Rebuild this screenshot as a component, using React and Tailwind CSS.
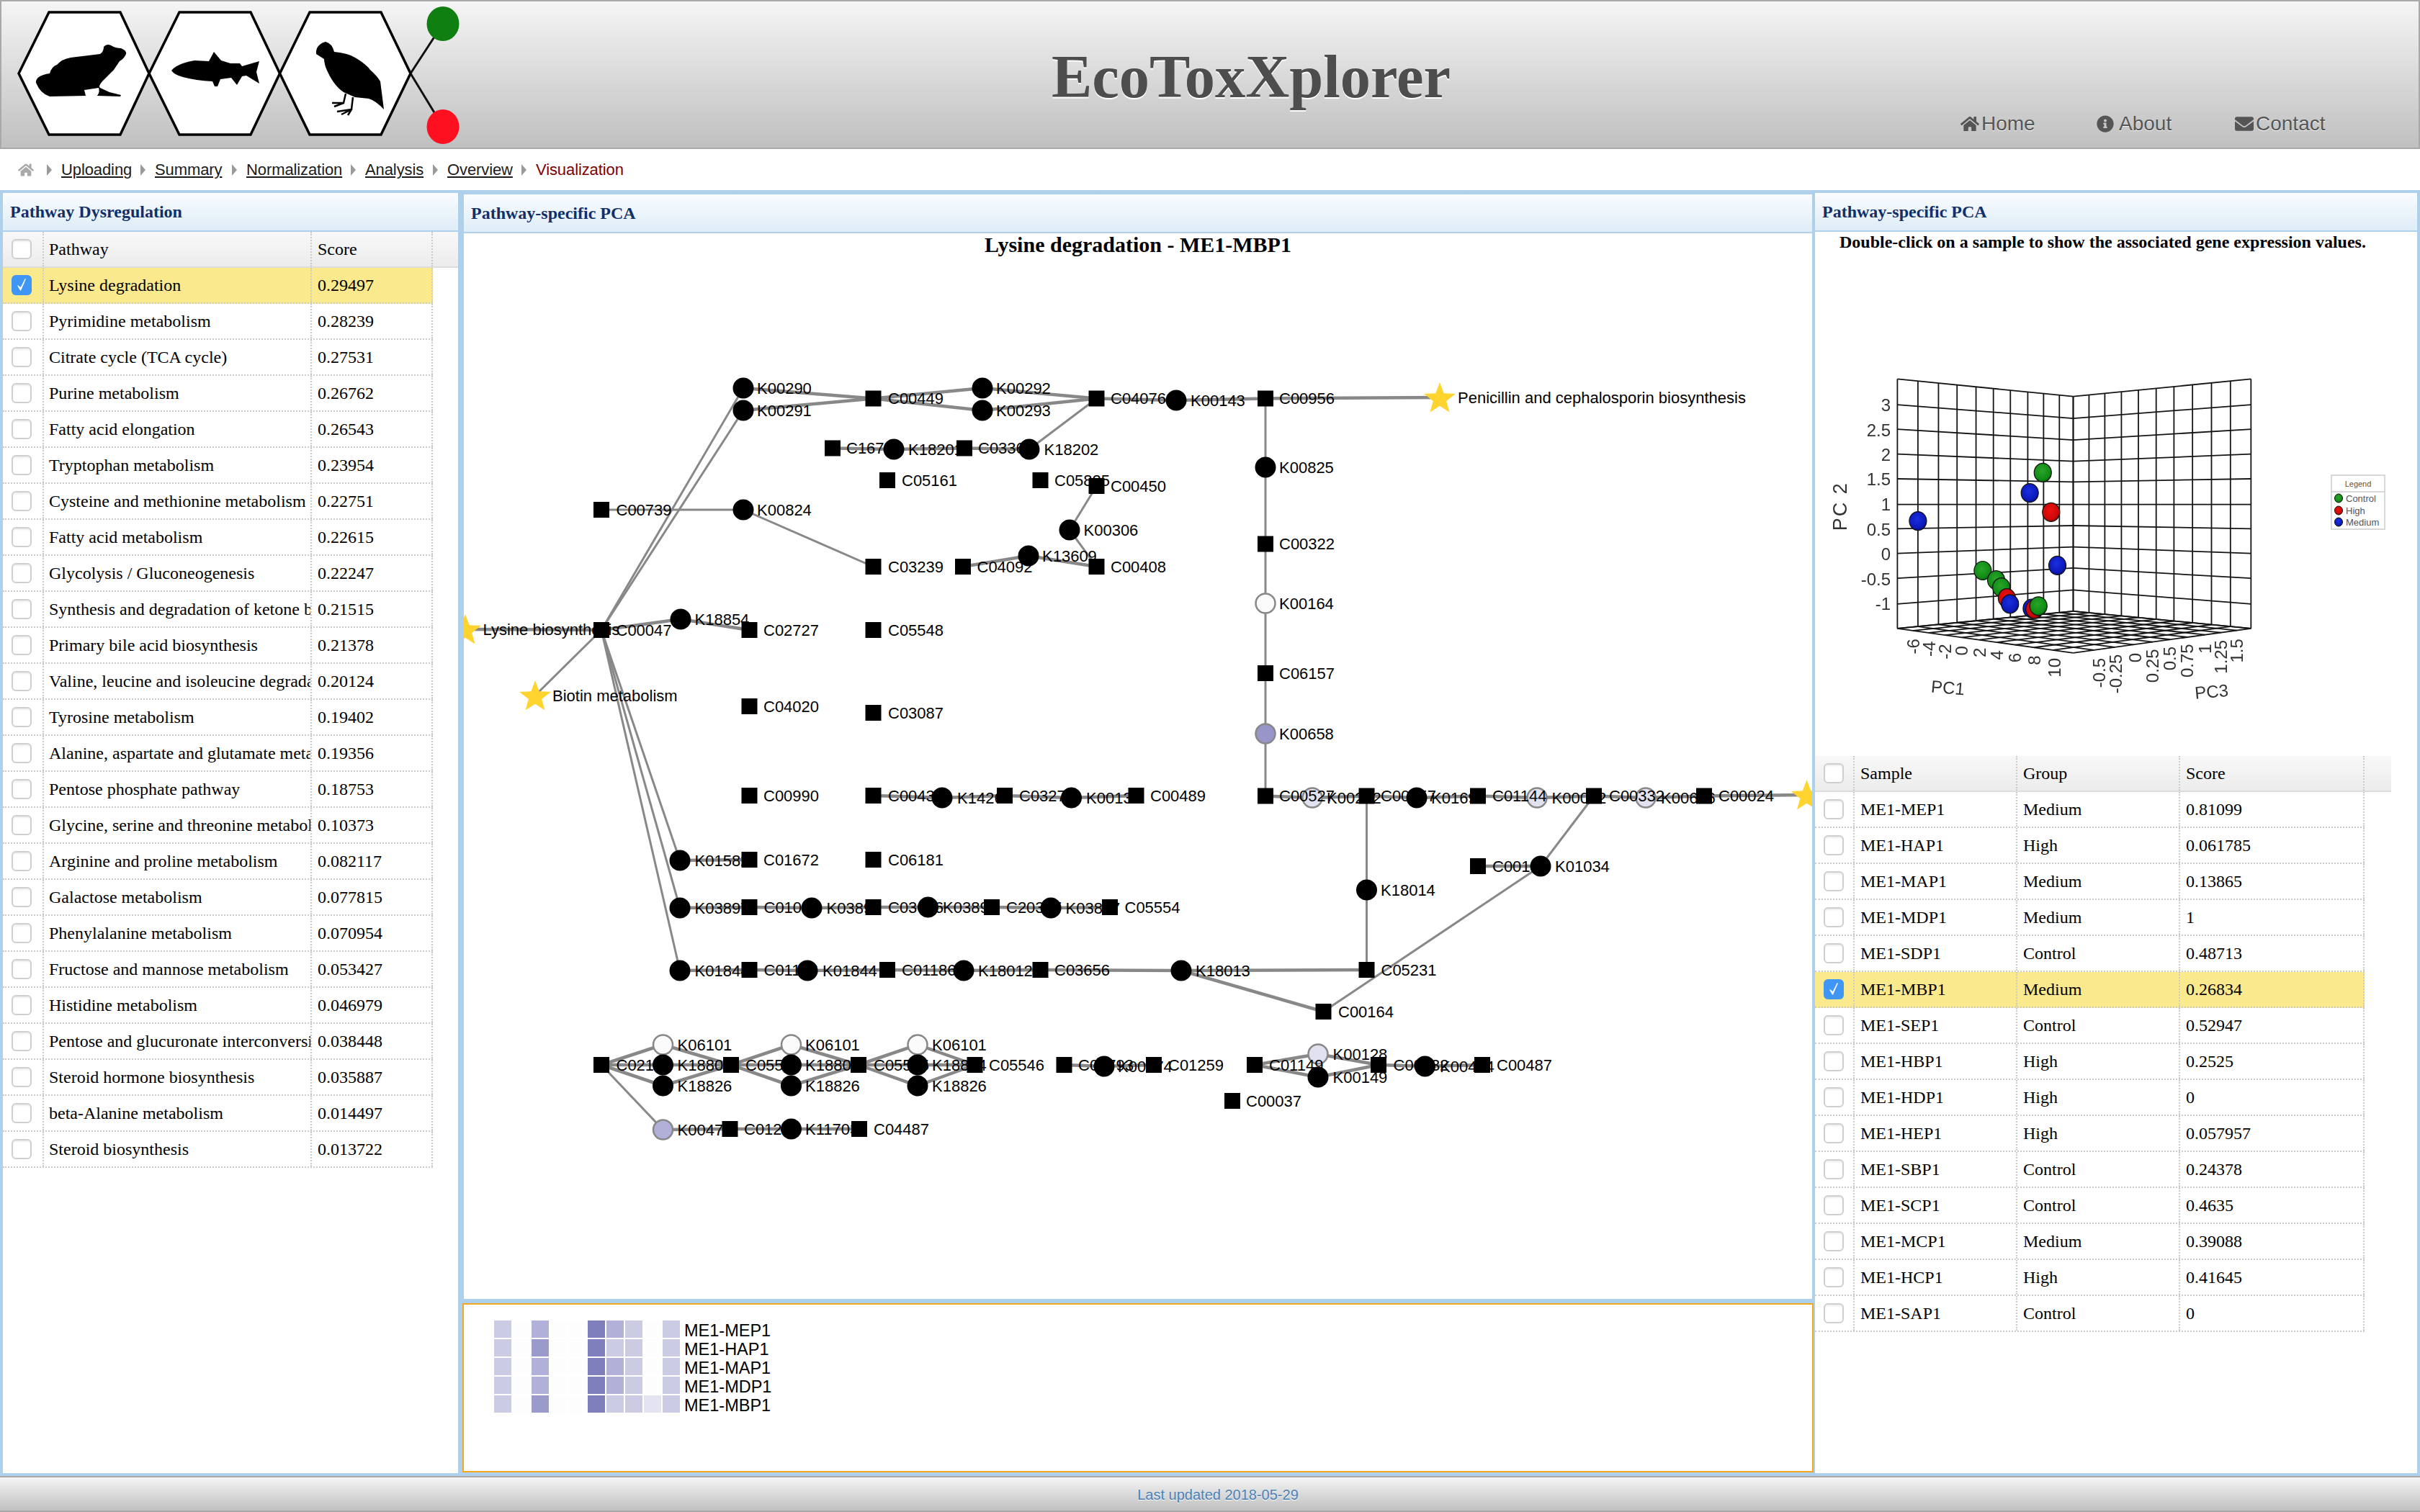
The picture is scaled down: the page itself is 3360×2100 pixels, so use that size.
import { FaHome, FaInfoCircle, FaEnvelope } from 'react-icons/fa';

const pathways = [
  ['Lysine degradation', '0.29497'],
  ['Pyrimidine metabolism', '0.28239'],
  ['Citrate cycle (TCA cycle)', '0.27531'],
  ['Purine metabolism', '0.26762'],
  ['Fatty acid elongation', '0.26543'],
  ['Tryptophan metabolism', '0.23954'],
  ['Cysteine and methionine metabolism', '0.22751'],
  ['Fatty acid metabolism', '0.22615'],
  ['Glycolysis / Gluconeogenesis', '0.22247'],
  ['Synthesis and degradation of ketone bodies', '0.21515'],
  ['Primary bile acid biosynthesis', '0.21378'],
  ['Valine, leucine and isoleucine degradation', '0.20124'],
  ['Tyrosine metabolism', '0.19402'],
  ['Alanine, aspartate and glutamate metabolism', '0.19356'],
  ['Pentose phosphate pathway', '0.18753'],
  ['Glycine, serine and threonine metabolism', '0.10373'],
  ['Arginine and proline metabolism', '0.082117'],
  ['Galactose metabolism', '0.077815'],
  ['Phenylalanine metabolism', '0.070954'],
  ['Fructose and mannose metabolism', '0.053427'],
  ['Histidine metabolism', '0.046979'],
  ['Pentose and glucuronate interconversions', '0.038448'],
  ['Steroid hormone biosynthesis', '0.035887'],
  ['beta-Alanine metabolism', '0.014497'],
  ['Steroid biosynthesis', '0.013722'],
];

const samples = [
  ['ME1-MEP1', 'Medium', '0.81099'],
  ['ME1-HAP1', 'High', '0.061785'],
  ['ME1-MAP1', 'Medium', '0.13865'],
  ['ME1-MDP1', 'Medium', '1'],
  ['ME1-SDP1', 'Control', '0.48713'],
  ['ME1-MBP1', 'Medium', '0.26834'],
  ['ME1-SEP1', 'Control', '0.52947'],
  ['ME1-HBP1', 'High', '0.2525'],
  ['ME1-HDP1', 'High', '0'],
  ['ME1-HEP1', 'High', '0.057957'],
  ['ME1-SBP1', 'Control', '0.24378'],
  ['ME1-SCP1', 'Control', '0.4635'],
  ['ME1-MCP1', 'Medium', '0.39088'],
  ['ME1-HCP1', 'High', '0.41645'],
  ['ME1-SAP1', 'Control', '0'],
];

// kind, x, y, label, label x, fill (page coordinates)
const nodes = {
  k290: ['c', 1032, 539, 'K00290', 1051], k291: ['c', 1032, 570, 'K00291', 1051],
  c449: ['s', 1212.5, 553.5, 'C00449', 1233], k292: ['c', 1364, 539, 'K00292', 1383],
  k293: ['c', 1364, 570, 'K00293', 1383], c4076: ['s', 1522.5, 553.5, 'C04076', 1542],
  c16741: ['s', 1156, 622.5, 'C16741', 1175], k18201: ['c', 1241, 624, 'K18201', 1261],
  c3366: ['s', 1339, 622.5, 'C03366', 1358], k18202: ['c', 1429, 624, 'K18202', 1449.5],
  c5161: ['s', 1232, 667, 'C05161', 1252], c5825: ['s', 1444.5, 667, 'C05825', 1464],
  c450: ['s', 1522.5, 675, 'C00450', 1542], c739: ['s', 835, 708, 'C00739', 855.5],
  k824: ['c', 1032, 708, 'K00824', 1051], k306: ['c', 1485, 736, 'K00306', 1504.5],
  c3239: ['s', 1212.5, 787, 'C03239', 1233], c4092: ['s', 1337, 787, 'C04092', 1356.5],
  k13609: ['c', 1428, 772, 'K13609', 1447], c408: ['s', 1522.5, 787, 'C00408', 1542],
  s1: ['*', 646, 874, 'Lysine biosynthesis', 670.5], c47: ['s', 835, 875, 'C00047', 855.5],
  k18854: ['c', 945, 860, 'K18854', 964.5], c2727: ['s', 1040.5, 875, 'C02727', 1060],
  c5548: ['s', 1212.5, 875, 'C05548', 1233], s2: ['*', 743, 966, 'Biotin metabolism', 767],
  c4020: ['s', 1040.5, 981, 'C04020', 1060], c3087: ['s', 1212.5, 990, 'C03087', 1233],
  c990: ['s', 1040.5, 1105, 'C00990', 1060], c431: ['s', 1212.5, 1105, 'C00431', 1233],
  k14268: ['c', 1308, 1108, 'K14268', 1329], c3273: ['s', 1395, 1105, 'C03273', 1415],
  k135: ['c', 1487.5, 1108, 'K00135', 1508], c489b: ['s', 1577.5, 1105, 'C00489', 1597],
  k143: ['c', 1633, 556, 'K00143', 1653], c956: ['s', 1757, 553.5, 'C00956', 1776],
  s3: ['*', 1999, 552, 'Penicillin and cephalosporin biosynthesis', 2024],
  k825: ['c', 1757, 649, 'K00825', 1776], c322: ['s', 1757, 755.5, 'C00322', 1776],
  k164: ['c', 1757, 838, 'K00164', 1776, '#fbfbfb'], c6157: ['s', 1757, 935, 'C06157', 1776],
  k658: ['c', 1757, 1019, 'K00658', 1776, '#9896c8'], c527: ['s', 1757, 1105.5, 'C00527', 1776],
  k252: ['c', 1822, 1108, 'K00252', 1842, '#e1e1f0'], c657: ['s', 1897.5, 1105.5, 'C00657', 1917],
  k1692: ['c', 1967, 1108, 'K01692', 1987], c1144: ['s', 2052, 1105.5, 'C01144', 2072],
  k22: ['c', 2134, 1108, 'K00022', 2154.5, '#e1e1f0'], c332: ['s', 2213, 1105.5, 'C00332', 2234],
  k626: ['c', 2285, 1108, 'K00626', 2306, '#e1e1f0'], c24: ['s', 2366, 1105.5, 'C00024', 2386],
  s4: ['*', 2508.5, 1104, '', 0], k18014: ['c', 1897.5, 1236, 'K18014', 1917],
  c136: ['s', 2052, 1203, 'C00136', 2072], k1034: ['c', 2139, 1203, 'K01034', 2159],
  k1582: ['c', 944, 1195, 'K01582', 964.5], c1672: ['s', 1040.5, 1194, 'C01672', 1060],
  c6181: ['s', 1212.5, 1194, 'C06181', 1233], k3897a: ['c', 944, 1261, 'K03897', 964.5],
  c1010: ['s', 1040.5, 1260, 'C01010', 1060.5], k3897b: ['c', 1127, 1261, 'K03897', 1147.5],
  c3656a: ['s', 1212.5, 1260, 'C03656', 1233], k3897c: ['c', 1288.5, 1260, 'K03897', 1309],
  c20387: ['s', 1377, 1260, 'C20387', 1397], k3897d: ['c', 1459, 1261, 'K03897', 1479.5],
  c5554: ['s', 1541, 1260, 'C05554', 1561.5], k1844a: ['c', 944, 1348, 'K01844', 964.5],
  c1186a: ['s', 1040.5, 1347, 'C01186', 1060.5], k1844b: ['c', 1121, 1348, 'K01844', 1142],
  c1186b: ['s', 1232, 1347, 'C01186', 1252], k18012: ['c', 1338, 1348, 'K18012', 1358],
  c3656b: ['s', 1444.5, 1347, 'C03656', 1464], k18013: ['c', 1640, 1348, 'K18013', 1660],
  c5231: ['s', 1897.5, 1347, 'C05231', 1917.5], c164: ['s', 1837.5, 1405, 'C00164', 1858],
  c2188: ['s', 835, 1479, 'C02188', 855.5], k6101a: ['c', 920.5, 1451, 'K06101', 940.5, '#fbfbfb'],
  k18804a: ['c', 920.5, 1479, 'K18804', 940.5], k18826a: ['c', 920.5, 1508, 'K18826', 940.5],
  c5544: ['s', 1015, 1479, 'C05544', 1035], k6101b: ['c', 1098.5, 1451, 'K06101', 1118, '#fbfbfb'],
  k18804b: ['c', 1098.5, 1479, 'K18804', 1118], k18826b: ['c', 1098.5, 1508, 'K18826', 1118],
  c5545: ['s', 1192, 1479, 'C05545', 1213], k6101c: ['c', 1274, 1451, 'K06101', 1294, '#fbfbfb'],
  k18804c: ['c', 1274, 1479, 'K18804', 1294], k18826c: ['c', 1274, 1508, 'K18826', 1294],
  c5546: ['s', 1353.5, 1479, 'C05546', 1373], c793: ['s', 1477.5, 1479, 'C00793', 1497],
  k74: ['c', 1533, 1481, 'K00074', 1552], c1259: ['s', 1602, 1479, 'C01259', 1622],
  c1149: ['s', 1742, 1479, 'C01149', 1762], k128: ['c', 1830, 1464, 'K00128', 1850.5, '#e1e1f0'],
  k149: ['c', 1830, 1496, 'K00149', 1850.5], c332b: ['s', 1914, 1479, 'C00332', 1934.5],
  k484: ['c', 1978.5, 1481, 'K00484', 1999], c487: ['s', 2058, 1479, 'C00487', 2078],
  c37: ['s', 1711, 1529, 'C00037', 1730], k474: ['c', 920.5, 1569, 'K00474', 940.5, '#b0b0d8'],
  c1259b: ['s', 1013.5, 1568, 'C01259', 1033], k11703: ['c', 1098.5, 1568, 'K11703', 1118],
  c4487: ['s', 1193, 1568, 'C04487', 1213],
};

// single edges
const thinEdges = [
  ['c47', 'k290'], ['c47', 'k291'], ['c47', 's2'], ['c47', 'k1582'], ['c47', 'k3897a'], ['c47', 'k1844a'],
  ['c739', 'k824'], ['k824', 'c3239'], ['k18202', 'c4076'], ['c450', 'k306'], ['k306', 'c408'],
  ['c956', 'k825'], ['k825', 'c322'], ['c322', 'k164'], ['k164', 'c6157'], ['c6157', 'k658'], ['k658', 'c527'],
  ['c657', 'k18014'], ['k18014', 'c5231'], ['c164', 'k1034'], ['k1034', 'c332'], ['c2188', 'k474'],
];

const thickEdges = [
  ['k290', 'c449'], ['k291', 'c449'], ['c449', 'k292'], ['c449', 'k293'], ['k292', 'c4076'], ['k293', 'c4076'],
  ['c4076', 'k143'], ['k143', 'c956'], ['c956', 's3'], ['c16741', 'k18201'], ['k18201', 'c3366'], ['c3366', 'k18202'],
  ['c4092', 'k13609'], ['k13609', 'c408'], ['s1', 'c47'], ['c47', 'k18854'], ['k18854', 'c2727'],
  ['c431', 'k14268'], ['k14268', 'c3273'], ['c3273', 'k135'], ['k135', 'c489b'],
  ['c527', 'k252'], ['k252', 'c657'], ['c657', 'k1692'], ['k1692', 'c1144'], ['c1144', 'k22'], ['k22', 'c332'],
  ['c332', 'k626'], ['k626', 'c24'], ['c24', 's4'], ['c136', 'k1034'], ['k1582', 'c1672'],
  ['k3897a', 'c1010'], ['c1010', 'k3897b'], ['k3897b', 'c3656a'], ['c3656a', 'k3897c'], ['k3897c', 'c20387'],
  ['c20387', 'k3897d'], ['k3897d', 'c5554'], ['k1844a', 'c1186a'], ['c1186a', 'k1844b'], ['k1844b', 'c1186b'],
  ['c1186b', 'k18012'], ['k18012', 'c3656b'], ['c3656b', 'k18013'], ['k18013', 'c5231'], ['k18013', 'c164'],
  ['c2188', 'k6101a'], ['c2188', 'k18804a'], ['c2188', 'k18826a'], ['k6101a', 'c5544'], ['k18804a', 'c5544'], ['k18826a', 'c5544'],
  ['c5544', 'k6101b'], ['c5544', 'k18804b'], ['c5544', 'k18826b'], ['k6101b', 'c5545'], ['k18804b', 'c5545'], ['k18826b', 'c5545'],
  ['c5545', 'k6101c'], ['c5545', 'k18804c'], ['c5545', 'k18826c'], ['k6101c', 'c5546'], ['k18804c', 'c5546'], ['k18826c', 'c5546'],
  ['c793', 'k74'], ['k74', 'c1259'], ['c1149', 'k128'], ['c1149', 'k149'], ['k128', 'c332b'], ['k149', 'c332b'],
  ['c332b', 'k484'], ['k484', 'c487'], ['k474', 'c1259b'], ['c1259b', 'k11703'], ['k11703', 'c4487'],
];

const L = '#cbcbe4';
const M = '#b0b0d8';
const D = '#9a9acb';
const X = '#7f7fbe';
const W = '#fdfdfd';
const heat = [
  ['ME1-MEP1', [L, W, M, W, W, X, M, L, W, L]],
  ['ME1-HAP1', [L, W, D, W, W, X, L, L, W, L]],
  ['ME1-MAP1', [L, W, M, W, W, X, M, L, W, L]],
  ['ME1-MDP1', [L, W, M, W, W, X, M, L, W, L]],
  ['ME1-MBP1', [L, W, D, W, W, X, L, L, '#e3e3f1', L]],
];

const serif = "[font-family:'Liberation_Serif',serif]";

function starPoints(cx, cy, r) {
  const pts = [];
  for (let i = 0; i < 10; i++) {
    const rad = i % 2 === 0 ? r : r * 0.42;
    const a = -Math.PI / 2 + (i * Math.PI) / 5;
    pts.push(`${cx + rad * Math.cos(a)},${cy + rad * Math.sin(a)}`);
  }
  return pts.join(' ');
}

function Checkbox({ checked }) {
  if (checked) {
    return (
      <div className="flex h-[28px] w-[28px] items-center justify-center rounded-[6px] bg-[#3f96f5]">
        <svg width="18" height="20" viewBox="0 0 18 20">
          <path d="M4 11 L7.5 17 L14 2 L8 14 Z" fill="#fff" stroke="#fff" strokeWidth="1.4" strokeLinejoin="round" />
        </svg>
      </div>
    );
  }
  return <div className="h-[28px] w-[28px] rounded-[6px] border-2 border-[#cfcfcf] bg-white shadow-[inset_0_2px_2px_#eee]" />;
}

function PaneTitle({ children, className }) {
  return (
    <div className={`flex items-center bg-linear-to-b from-[#f9fcfe] to-[#deedf7] text-[24px] font-bold text-[#11306a] ${serif} ${className}`}>
      {children}
    </div>
  );
}

function Cell({ className, children }) {
  return (
    <div className={`flex h-full shrink-0 items-center overflow-hidden whitespace-nowrap border-r-2 border-dotted border-[#ccc] ${className}`}>
      {children}
    </div>
  );
}

function Logo() {
  return (
    <svg width="640" height="200" viewBox="0 2 640 200" className="shrink-0">
      <path d="M568 102 L613 33 M568 102 L613 176" stroke="#111" strokeWidth="3" fill="none" />
      <ellipse cx="613" cy="33" rx="22.5" ry="24" fill="#0f7f12" />
      <ellipse cx="613" cy="176" rx="22.5" ry="24" fill="#ff1020" />
      <path d="M24 102 L66 17 L165 17 L205 102 L165 187 L66 187 Z" fill="#fff" stroke="#000" strokeWidth="3.5" />
      <path d="M205 102 L247 17 L346 17 L386.5 102 L346 187 L247 187 Z" fill="#fff" stroke="#000" strokeWidth="3.5" />
      <path d="M386.5 102 L428 17 L527 17 L568 102 L527 187 L428 187 Z" fill="#fff" stroke="#000" strokeWidth="3.5" />
      {/* frog */}
      <path d="M142 65 Q146 60 152 63 Q158 67 166 67 Q174 70 173 75 Q170 82 164 85 L156 97 L140 113 Q134 120 137 122 L150 128 L166 132 L165 134 L133 133 Q137 128 135 122 L115 125 L117 133 L67 134 Q54 130 48 115 Q47 105 67 102 Q70 92 77 90 Q84 82 96 80 L137 75 Q142 72 142 65 Z" fill="#000" />
      {/* fish */}
      <path d="M236 98 Q244 88 268 84 L288 85 L295 72 L305 84 L318 88 L331 88 L334 92 L358 85 L354 100 L358 116 L340 105 L334 106 L327 118 L319 108 L304 110 L300 120 L296 120 L293 113 Q270 112 252 107 Q240 104 236 98 Z" fill="#000" />
      {/* bird */}
      <path d="M450 58 Q459 60 462 72 Q482 74 491 80 Q505 88 512 97 Q522 106 526 113 L531 152 Q520 140 510 137 L491 135 L475 128 Q460 118 450 93 Q448 86 448 82 L437 75 Q436 62 450 58 Z" fill="#000" />
      <path d="M478 130 L475 143 L459 143 M475 143 L462 148 M488 135 L486 152 L466 155 M486 152 L472 159 M486 152 L481 160" stroke="#000" strokeWidth="2.5" fill="none" />
    </svg>
  );
}

function Crumbs() {
  const items = [
    ['Uploading', 'w-[97px]'],
    ['Summary', 'w-[94px]'],
    ['Normalization', 'w-[132px]'],
    ['Analysis', 'w-[81px]'],
    ['Overview', 'w-[90px]'],
  ];
  const arrow = (
    <svg width="9" height="16" viewBox="0 0 9 16" className="mx-[12px] shrink-0">
      <path d="M1 0 L8 8 L1 16 Z" fill="#9a9a9a" />
    </svg>
  );
  return (
    <div className="flex h-[57px] shrink-0 items-center pl-[25px] text-[22px] tracking-[-0.1px] [font-family:'Liberation_Sans',sans-serif]">
      <FaHome className="mr-[5px] shrink-0 text-[#a9a9a9]" size={22} />
      {items.map(([label, w]) => (
        <div key={label} className="flex items-center">
          {arrow}
          <span className={`${w} whitespace-nowrap text-[#1c1c1c] underline`}>{label}</span>
        </div>
      ))}
      {arrow}
      <span className="whitespace-nowrap text-[#800000]">Visualization</span>
    </div>
  );
}

function Network() {
  const line = (a, b, w, key) => {
    const [, x1, y1] = nodes[a];
    const [, x2, y2] = nodes[b];
    return <line key={key} x1={x1} y1={y1} x2={x2} y2={y2} stroke="#888" strokeWidth={w} />;
  };
  return (
    <svg width="1872" height="1480" viewBox="644 324 1872 1480" className="block">
      <text x="1580" y="339" textAnchor="middle" dominantBaseline="central" fontSize="30" fontWeight="700" fontFamily="'Liberation Serif', serif">
        Lysine degradation - ME1-MBP1
      </text>
      {thinEdges.map(([a, b], i) => line(a, b, 3, `t${i}`))}
      {thickEdges.map(([a, b], i) => line(a, b, 4.5, `k${i}`))}
      {Object.entries(nodes).map(([id, [kind, x, y, , , fill]]) => {
        if (kind === 's') return <rect key={id} x={x - 11} y={y - 11} width="22" height="22" fill="#000" />;
        if (kind === '*') return <polygon key={id} points={starPoints(x, y + 2, 23)} fill="#ffd42f" />;
        return fill ? (
          <ellipse key={id} cx={x} cy={y} rx="13.5" ry="13.5" fill={fill} stroke="#888" strokeWidth="2.5" />
        ) : (
          <ellipse key={id} cx={x} cy={y} rx="14.5" ry="14.5" fill="#000" />
        );
      })}
      {Object.entries(nodes).map(([id, [, , y, label, lx]]) => (
        <text key={id} x={lx} y={y} dominantBaseline="central" fontSize="22" fontFamily="'Liberation Sans', sans-serif" fill="#000">
          {label}
        </text>
      ))}
    </svg>
  );
}

const px = (v) => 2500 + v / 1.823;
const py = (v) => 480 + v / 2.8;
const lerp = (a, b, t) => a + (b - a) * t;

function Pca() {
  const leftX = [245, 297, 349, 396, 444, 488, 531, 575, 615, 655, 690];
  const rightX = [690, 730, 770, 812, 855, 900, 945, 992, 1040, 1088, 1140];
  const leftY = [130, 230, 325, 422, 518, 618, 712, 808, 905, 1005, 1100];
  const midY = [198, 283, 367, 450, 530, 618, 700, 783, 865, 950, 1033];
  const A = [245, 1100];
  const B = [690, 1033];
  const C = [1140, 1100];
  const F = [690, 1195];
  const seg = (x1, y1, x2, y2, key) => (
    <line key={key} x1={px(x1)} y1={py(y1)} x2={px(x2)} y2={py(y2)} stroke="#151515" strokeWidth="1.8" />
  );
  const yTicks = [
    ['3', 230], ['2.5', 330], ['2', 425], ['1.5', 520], ['1', 618], ['0.5', 715], ['0', 810], ['-0.5', 908], ['-1', 1005],
  ];
  const xTicks = [
    ['-6', 285, 1140], ['-4', 325, 1150], ['-2', 365, 1160], ['0', 408, 1168], ['2', 453, 1175], ['4', 497, 1185],
    ['6', 543, 1195], ['8', 592, 1205], ['10', 642, 1215], ['-0.5', 755, 1215], ['-0.25', 798, 1200], ['0', 846, 1195],
    ['0.25', 890, 1180], ['0.5', 935, 1170], ['0.75', 978, 1160], ['1', 1023, 1160], ['1.25', 1063, 1145], ['1.5', 1103, 1140],
  ];
  const spheres = [
    [613, 494, 'g'], [580, 573, 'b'], [634, 648, 'r'], [297, 682, 'b'], [650, 855, 'b'], [461, 875, 'g'], [495, 912, 'g'],
    [508, 940, 'g'], [522, 982, 'r'], [530, 1005, 'b'], [585, 1022, 'b'], [592, 1025, 'r'], [602, 1013, 'g'],
  ];
  const font = "'Liberation Sans', sans-serif";
  return (
    <svg width="800" height="698" viewBox="2520 352 800 698" className="block shrink-0 blur-[0.6px]">
      <defs>
        <radialGradient id="g" cx="45%" cy="40%" r="65%"><stop offset="0" stopColor="#2aa52a" /><stop offset="0.75" stopColor="#0f8a14" /><stop offset="1" stopColor="#063d08" /></radialGradient>
        <radialGradient id="r" cx="45%" cy="40%" r="65%"><stop offset="0" stopColor="#f01010" /><stop offset="0.75" stopColor="#c80808" /><stop offset="1" stopColor="#5a0404" /></radialGradient>
        <radialGradient id="b" cx="45%" cy="40%" r="65%"><stop offset="0" stopColor="#1a2fe0" /><stop offset="0.75" stopColor="#0c18b8" /><stop offset="1" stopColor="#060c55" /></radialGradient>
      </defs>
      {leftX.map((x, i) => {
        const t = (x - 245) / 445;
        return seg(x, lerp(130, 198, t), x, lerp(1100, 1033, t), `lv${i}`);
      })}
      {rightX.map((x, i) => {
        const t = (x - 690) / 450;
        return seg(x, lerp(198, 130, t), x, lerp(1033, 1100, t), `rv${i}`);
      })}
      {leftY.map((y, i) => (
        <g key={y}>
          {seg(245, y, 690, midY[i], `hl${i}`)}
          {seg(690, midY[i], 1140, y, `hr${i}`)}
        </g>
      ))}
      {leftX.map((x, i) => {
        const t = (x - 245) / 445;
        return seg(lerp(A[0], B[0], t), lerp(A[1], B[1], t), lerp(F[0], C[0], t), lerp(F[1], C[1], t), `fa${i}`);
      })}
      {rightX.map((x, i) => {
        const t = (x - 690) / 450;
        return seg(lerp(B[0], C[0], t), lerp(B[1], C[1], t), lerp(A[0], F[0], t), lerp(A[1], F[1], t), `fb${i}`);
      })}
      {spheres.map(([x, y, c], i) => (
        <ellipse key={i} cx={px(x)} cy={py(y)} rx="12" ry="13" fill={`url(#${c})`} stroke="#111" strokeWidth="1.2" />
      ))}
      {yTicks.map(([t, y]) => (
        <text key={t} x={px(228)} y={py(y)} textAnchor="end" dominantBaseline="central" fontSize="24" fill="#333" fontFamily={font}>{t}</text>
      ))}
      {xTicks.map(([t, x, y], i) => (
        <text key={i} transform={`translate(${px(x)} ${py(y)}) rotate(-90)`} textAnchor="end" dominantBaseline="central" fontSize="24" fill="#333" fontFamily={font}>{t}</text>
      ))}
      <text transform={`translate(${px(100)} ${py(625)}) rotate(-90)`} textAnchor="middle" dominantBaseline="central" fontSize="27" letterSpacing="2" fill="#333" fontFamily={font}>PC 2</text>
      <text transform={`translate(${px(373)} ${py(1330)}) rotate(5)`} textAnchor="middle" dominantBaseline="central" fontSize="24" fill="#333" fontFamily={font}>PC1</text>
      <text transform={`translate(${px(1040)} ${py(1345)}) rotate(-5)`} textAnchor="middle" dominantBaseline="central" fontSize="24" fill="#333" fontFamily={font}>PC3</text>
      <rect x="3237" y="660" width="74" height="75" fill="#fff" stroke="#ccc" strokeWidth="1.5" />
      <line x1="3237" y1="683" x2="3311" y2="683" stroke="#ccc" strokeWidth="1.5" />
      <text x="3274" y="672" textAnchor="middle" dominantBaseline="central" fontSize="11" fill="#555" fontFamily={font}>Legend</text>
      {[['Control', 692, 'g'], ['High', 709, 'r'], ['Medium', 725, 'b']].map(([t, y, c]) => (
        <g key={t}>
          <ellipse cx="3247" cy={y} rx="5.5" ry="6" fill={`url(#${c})`} stroke="#111" />
          <text x="3257" y={y} dominantBaseline="central" fontSize="13" fill="#555" fontFamily={font}>{t}</text>
        </g>
      ))}
    </svg>
  );
}

export default function App() {
  return (
    <div className={`flex h-[2100px] w-[3360px] flex-col overflow-hidden bg-white text-black ${serif}`}>
      {/* top banner */}
      <div className="flex h-[207px] shrink-0 border-2 border-[#a9a9a9] bg-linear-to-b from-[#f5f5f5] to-[#c0c0c0]">
        <Logo />
        <div className="w-[2080px] shrink-0 pl-[818px] pt-[63px] text-[84.5px] font-bold leading-none text-[#4d4d4d] [text-shadow:0_2px_0_#fff]">
          EcoToxXplorer
        </div>
        <div className="flex h-full items-start pt-[153px] text-[28px] leading-[34px] text-[#555] [font-family:'Liberation_Sans',sans-serif] [text-shadow:0_1px_0_#fff]">
          <div className="flex w-[189px] items-center"><FaHome size={26} className="mr-[3px]" /><span>Home</span></div>
          <div className="flex w-[192px] items-center gap-[5px]"><FaInfoCircle size={24} className="mr-[2px]" /><span>About</span></div>
          <div className="flex items-center"><FaEnvelope size={26} className="mr-[3px]" /><span>Contact</span></div>
        </div>
      </div>

      <Crumbs />

      {/* panes */}
      <div className="flex h-[1786px] shrink-0 bg-[#aed0ea] pt-[4px]">
        <div className="ml-[4px] flex h-[1778px] w-[632px] shrink-0 flex-col bg-white text-[24px]">
          <PaneTitle className="h-[54px] shrink-0 border-b-2 border-[#aed0ea] pl-[10px]">Pathway Dysregulation</PaneTitle>
          <div className="flex h-[50px] shrink-0 border-b-2 border-[#ddd] bg-linear-to-b from-[#f8f8f8] to-[#ececec]">
            <Cell className="w-[57px] pl-[12px]"><Checkbox /></Cell>
            <Cell className="w-[372px] pl-[7px]">Pathway</Cell>
            <Cell className="w-[168px] pl-[8px]">Score</Cell>
          </div>
          {pathways.map(([name, score], i) => (
            <div key={name} className={`flex h-[50px] w-[597px] shrink-0 border-b-2 border-dotted border-[#ccc] ${i === 0 ? 'bg-[#fae98d]' : ''}`}>
              <Cell className="w-[57px] pl-[12px]"><Checkbox checked={i === 0} /></Cell>
              <Cell className="w-[372px] pl-[7px]">{name}</Cell>
              <Cell className="w-[168px] pl-[8px]">{score}</Cell>
            </div>
          ))}
        </div>

        <div className="ml-[6px] flex w-[1876px] shrink-0 flex-col pt-[2px]">
          <div className="mx-[2px] flex h-[54px] shrink-0 flex-col">
            <PaneTitle className="h-[52px] shrink-0 pl-[10px]">Pathway-specific PCA</PaneTitle>
          </div>
          <div className="mx-[2px] h-[1480px] shrink-0 overflow-hidden bg-white"><Network /></div>
          <div className="mt-[6px] h-[235px] shrink-0 border-2 border-[#f5a623] bg-white pl-[42px] pt-[22px]">
            <div className="flex flex-col gap-[2px]">
              {heat.map(([label, cells]) => (
                <div key={label} className="flex h-[24px] items-center gap-[2px]">
                  {cells.map((c, i) => (
                    <div key={i} className="h-[24px] w-[24px]" style={{ backgroundColor: c }} />
                  ))}
                  <span className="ml-[4px] pt-[4px] text-[23.5px] leading-[24px] [font-family:'Liberation_Sans',sans-serif]">{label}</span>
                </div>
              ))}
            </div>
          </div>
        </div>

        <div className="ml-[2px] flex h-[1778px] w-[836px] shrink-0 flex-col bg-white text-[24px]">
          <PaneTitle className="h-[54px] shrink-0 border-b-2 border-[#aed0ea] pl-[10px]">Pathway-specific PCA</PaneTitle>
          <div className="h-[30px] shrink-0 pl-[34px] text-[24px] font-bold leading-[28px]">
            Double-click on a sample to show the associated gene expression values.
          </div>
          <Pca />
          <div className="flex h-[50px] w-[800px] shrink-0 border-b-2 border-[#ddd] bg-linear-to-b from-[#f8f8f8] to-[#ececec]">
            <Cell className="w-[55px] pl-[12px]"><Checkbox /></Cell>
            <Cell className="w-[226px] pl-[8px]">Sample</Cell>
            <Cell className="w-[226px] pl-[8px]">Group</Cell>
            <Cell className="w-[256px] pl-[8px]">Score</Cell>
          </div>
          {samples.map(([name, group, score], i) => (
            <div key={name} className={`flex h-[50px] w-[763px] shrink-0 border-b-2 border-dotted border-[#ccc] ${i === 5 ? 'bg-[#fae98d]' : ''}`}>
              <Cell className="w-[55px] pl-[12px]"><Checkbox checked={i === 5} /></Cell>
              <Cell className="w-[226px] pl-[8px]">{name}</Cell>
              <Cell className="w-[226px] pl-[8px]">{group}</Cell>
              <Cell className="w-[256px] pl-[8px]">{score}</Cell>
            </div>
          ))}
        </div>
      </div>

      {/* footer */}
      <div className="flex h-[50px] shrink-0 items-center justify-center border-y-2 border-[#a9a9a9] bg-linear-to-b from-[#f5f5f5] to-[#c0c0c0] pl-[22px] pt-[2px] text-[20px] text-[#4a80b8] [font-family:'Liberation_Sans',sans-serif] [text-shadow:0_1px_0_#fff]">
        Last updated 2018-05-29
      </div>
    </div>
  );
}
